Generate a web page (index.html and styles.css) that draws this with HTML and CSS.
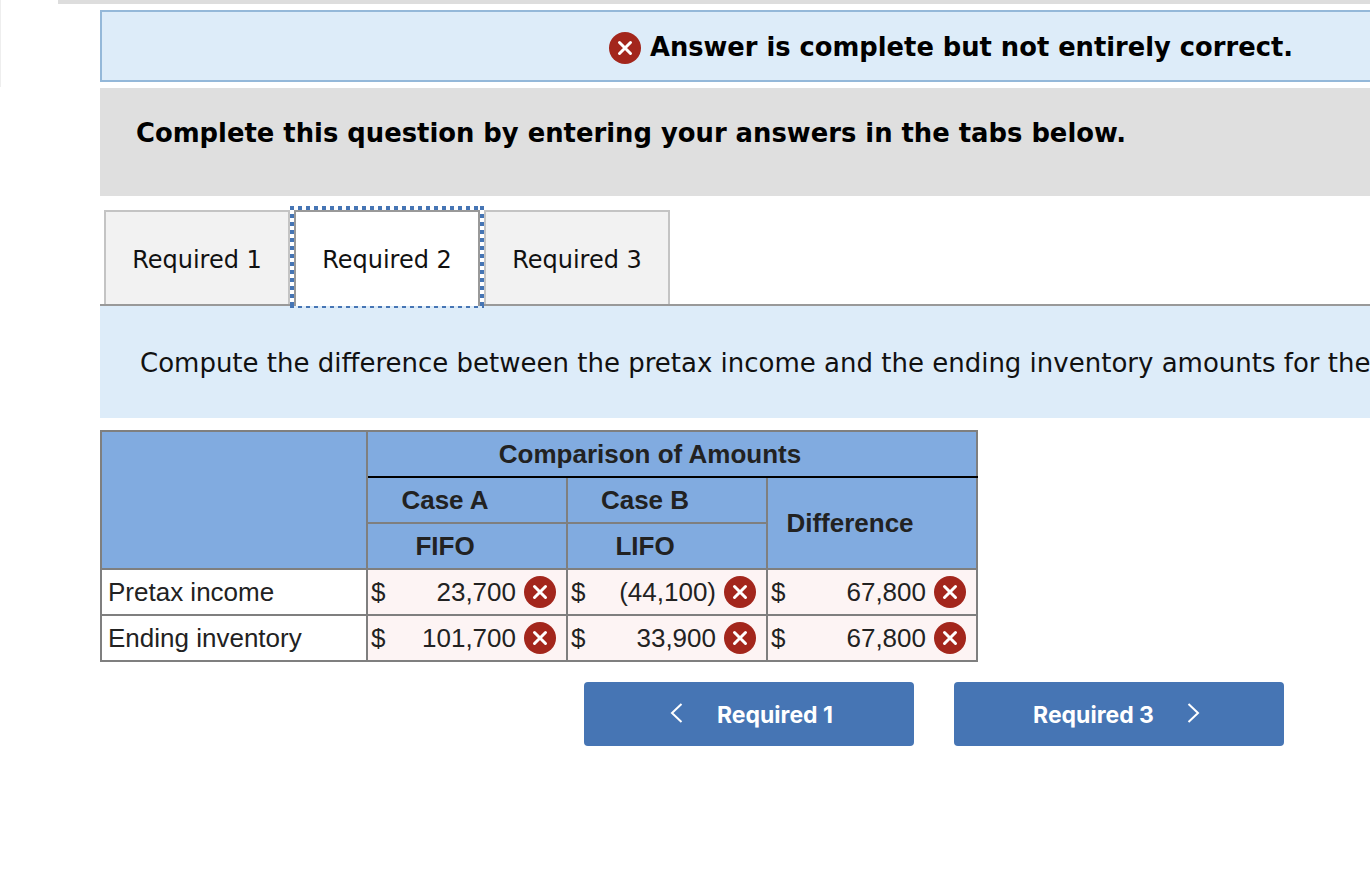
FILE: index.html
```html
<!DOCTYPE html>
<html lang="en">
<head>
  <meta charset="UTF-8" />
  <title>Required 2</title>
  <link rel="stylesheet" href="styles.css">
</head>
<body>
  <svg class="defs" width="0" height="0">
    <symbol id="wrong" viewBox="0 0 32 32">
      <circle cx="16" cy="16" r="16" fill="#a3261c"/>
      <path d="M10.5 10.5 L21.5 21.5 M21.5 10.5 L10.5 21.5" stroke="#fff" stroke-width="3" stroke-linecap="round"/>
    </symbol>
  </svg>

  <div class="top-rule"></div>
  <div class="side-edge"></div>

  <div class="container">
    <div class="alert">
      <svg class="icon-alert"><use href="#wrong"/></svg>
      <span>Answer is complete but not entirely correct.</span>
    </div>

    <div class="instructions">Complete this question by entering your answers in the tabs below.</div>

    <div class="tabs">
      <div class="tab">Required 1</div>
      <div class="tab active">Required 2</div>
      <div class="tab">Required 3</div>
    </div>

    <div class="prompt">Compute the difference between the pretax income and the ending inventory amounts for the</div>

    <table class="answers">
      <colgroup>
        <col class="col-label">
        <col class="col-case">
        <col class="col-case">
        <col class="col-diff">
      </colgroup>
      <tr>
        <th class="blank" rowspan="3"></th>
        <th class="title" colspan="3">Comparison of Amounts</th>
      </tr>
      <tr>
        <th>Case A</th>
        <th>Case B</th>
        <th rowspan="2">Difference</th>
      </tr>
      <tr>
        <th>FIFO</th>
        <th>LIFO</th>
      </tr>
      <tr>
        <td class="label">Pretax income</td>
        <td class="wrong"><div class="cell"><span>$</span><span class="amount">23,700</span><svg class="icon"><use href="#wrong"/></svg></div></td>
        <td class="wrong"><div class="cell"><span>$</span><span class="amount">(44,100)</span><svg class="icon"><use href="#wrong"/></svg></div></td>
        <td class="wrong"><div class="cell"><span>$</span><span class="amount">67,800</span><svg class="icon"><use href="#wrong"/></svg></div></td>
      </tr>
      <tr>
        <td class="label">Ending inventory</td>
        <td class="wrong"><div class="cell"><span>$</span><span class="amount">101,700</span><svg class="icon"><use href="#wrong"/></svg></div></td>
        <td class="wrong"><div class="cell"><span>$</span><span class="amount">33,900</span><svg class="icon"><use href="#wrong"/></svg></div></td>
        <td class="wrong"><div class="cell"><span>$</span><span class="amount">67,800</span><svg class="icon"><use href="#wrong"/></svg></div></td>
      </tr>
    </table>

    <div class="nav">
      <button class="nav-btn prev">
        <svg class="chevron" viewBox="0 0 13 20"><path d="M11.5 1 L2 10 L11.5 19" fill="none" stroke="#fff" stroke-width="2"/></svg>
        <span>Required 1</span>
      </button>
      <button class="nav-btn next">
        <span>Required 3</span>
        <svg class="chevron" viewBox="0 0 13 20"><path d="M1.5 1 L11 10 L1.5 19" fill="none" stroke="#fff" stroke-width="2"/></svg>
      </button>
    </div>
  </div>
</body>
</html>
```

FILE: styles.css
```css
html, body {
  margin: 0;
  padding: 0;
  height: 100%;
  overflow: hidden;
  background-color: #fff;
}

.defs {
  position: absolute;
}

.top-rule {
  height: 4px;
  margin-left: 58px;
  background-color: #ddd;
}

.side-edge {
  position: absolute;
  left: 0;
  top: 0;
  width: 1px;
  height: 87px;
  background-color: #eee;
}

.container {
  padding: 6px 0 0 100px;
  width: 1270px;
}

.alert {
  box-sizing: border-box;
  height: 72px;
  margin-right: -4px;
  padding: 2px 79px 0 0;
  display: flex;
  justify-content: flex-end;
  align-items: center;
  gap: 9px;
  background-color: #ddecf9;
  border: 2px solid #94b8d9;
  font-family: "DejaVu Sans", Verdana, sans-serif;
  font-size: 25.76px;
  font-weight: bold;
  color: #000;
  white-space: nowrap;
}

.icon-alert {
  width: 32px;
  height: 32px;
  margin-top: 2px;
}

.instructions {
  box-sizing: border-box;
  height: 108px;
  margin-top: 6px;
  padding: 30px 36px;
  background-color: #dfdfdf;
  font-family: "DejaVu Sans", Verdana, sans-serif;
  font-size: 25.83px;
  font-weight: bold;
  line-height: 30px;
  color: #000;
  white-space: nowrap;
}

.tabs {
  display: flex;
  height: 96px;
  margin-top: 14px;
  padding-left: 4px;
  border-bottom: 2px solid #999;
  box-sizing: border-box;
}

.tab {
  box-sizing: border-box;
  width: 186px;
  height: 94px;
  padding-top: 33px;
  text-align: center;
  background-color: #f2f2f2;
  border: 2px solid #c4c4c4;
  border-bottom: none;
  font-family: "DejaVu Sans", Verdana, sans-serif;
  font-size: 24px;
  line-height: 30px;
  color: #111;
}

.tab.active {
  position: relative;
  height: 96px;
  margin: 0 4px;
  border: 2px solid #999;
  border-bottom: none;
  background-color: #fff;
}

/* focus ring: square dots, drawn so the period matches */
.tab.active::after {
  content: "";
  position: absolute;
  left: -6px;
  right: -6px;
  top: -6px;
  bottom: -2px;
  background:
    repeating-linear-gradient(90deg, #4675b4 0 4px, transparent 4px 8px) left top / 100% 4px no-repeat,
    repeating-linear-gradient(90deg, #4675b4 0 4px, transparent 4px 8px) left bottom / 100% 2px no-repeat,
    repeating-linear-gradient(180deg, #4675b4 0 4px, transparent 4px 8px) left top / 4px 100% no-repeat,
    repeating-linear-gradient(180deg, #4675b4 0 4px, transparent 4px 8px) right top / 4px 100% no-repeat;
}

.prompt {
  height: 112px;
  box-sizing: border-box;
  padding: 41px 0 0 40px;
  background-color: #ddecf9;
  font-family: "DejaVu Sans", Verdana, sans-serif;
  font-size: 26px;
  line-height: 32px;
  color: #111;
  white-space: nowrap;
}

.answers {
  margin-top: 12px;
  border-collapse: collapse;
  width: 876px;
  table-layout: fixed;
  font-family: "Liberation Sans", Arial, sans-serif;
  font-size: 26px;
  color: #222;
}

.col-label {
  width: 266px;
}

.col-case {
  width: 200px;
}

.col-diff {
  width: 210px;
}

.answers th,
.answers td {
  border: 2px solid #7f7f7f;
  padding: 0;
  height: 46px;
  box-sizing: border-box;
}

.answers th {
  padding-right: 44px;
  background-color: #81abe0;
  font-weight: bold;
  text-align: center;
}

.answers .blank {
  padding-right: 0;
}

.answers .title {
  border-bottom: 2px solid #000;
}

.answers .label {
  padding-left: 6px;
  background-color: #fff;
}

.answers .wrong {
  background-color: #fdf4f4;
}

.cell {
  display: flex;
  align-items: center;
  padding: 0 10px 0 3px;
}

.amount {
  flex: 1;
  text-align: right;
  margin-right: 8px;
}

.icon {
  width: 32px;
  height: 32px;
  flex: none;
}

.nav {
  display: flex;
  gap: 40px;
  margin-top: 20px;
  margin-left: 484px;
}

.nav-btn {
  width: 330px;
  height: 64px;
  display: flex;
  justify-content: center;
  align-items: center;
  gap: 34px;
  border: none;
  border-radius: 4px;
  background-color: #4675b4;
  color: #fff;
  font-family: Inter, sans-serif;
  font-size: 23px;
  font-weight: 700;
}

.nav-btn span {
  margin-top: 2px;
}

.nav-btn.prev {
  padding: 0 0 0 5px;
}

.nav-btn.next {
  gap: 33px;
  padding: 0 5px 0 0;
}

.chevron {
  width: 13px;
  height: 20px;
  margin-bottom: 2px;
}
```
